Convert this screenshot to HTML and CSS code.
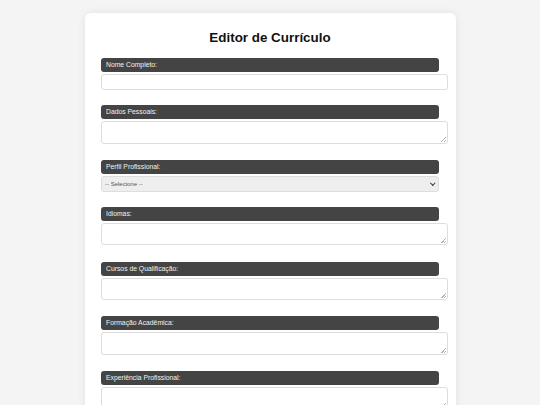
FILE: index.html
```html
<!DOCTYPE html>
<html lang="pt-BR">
<head>
<meta charset="utf-8">
<title>Editor de Currículo</title>
<link rel="stylesheet" href="styles.css">
</head>
<body>
<div class="card">
  <h1 class="title">Editor de Currículo</h1>
  <form class="form">
    <label class="lbl" for="nome">Nome Completo:</label>
    <input class="inp" id="nome" type="text">

    <label class="lbl" for="dados">Dados Pessoais:</label>
    <textarea class="area" id="dados"></textarea>

    <label class="lbl" for="perfil">Perfil Profissional:</label>
    <div class="selwrap">
      <select class="sel" id="perfil">
        <option>-- Selecione --</option>
      </select>
    </div>

    <label class="lbl" for="idiomas">Idiomas:</label>
    <textarea class="area" id="idiomas"></textarea>

    <label class="lbl" for="cursos">Cursos de Qualificação:</label>
    <textarea class="area" id="cursos"></textarea>

    <label class="lbl" for="formacao">Formação Acadêmica:</label>
    <textarea class="area" id="formacao"></textarea>

    <label class="lbl" for="exp">Experiência Profissional:</label>
    <textarea class="area" id="exp"></textarea>
  </form>
</div>
</body>
</html>
```
FILE: styles.css
```css
html, body {
  margin: 0;
  padding: 0;
}
body {
  background: #f4f4f4;
  font-family: "Liberation Sans", Arial, sans-serif;
  color: #222;
}
.card {
  width: 371px;
  box-sizing: border-box;
  margin: 13px 0 0 85px;
  background: #fff;
  border-radius: 6px;
  box-shadow: 0 0 8px rgba(0, 0, 0, 0.08);
  padding: 17px 17px 20px 16px;
  min-height: 420px;
}
.title {
  margin: 0 0 13px;
  font-size: 13.4px;
  line-height: 15px;
  font-weight: bold;
  text-align: center;
  color: #111;
}
.form {
  display: flex;
  flex-direction: column;
  align-items: flex-start;
}
.lbl {
  display: block;
  box-sizing: border-box;
  width: 338px;
  height: 14px;
  line-height: 14px;
  padding: 0 5px;
  background: #444;
  color: #f2f2f2;
  font-size: 6.8px;
  border-radius: 3px;
  margin-bottom: 2px;
}
.inp {
  display: block;
  box-sizing: border-box;
  width: 347px;
  height: 16px;
  border: 1px solid #ddd;
  border-radius: 3px;
  background: #fff;
  margin: 0 0 15px;
  padding: 3px 4px;
  font-family: inherit;
  font-size: 7px;
}
.area {
  display: block;
  box-sizing: border-box;
  width: 347px;
  height: 22.5px;
  border: 1px solid #ddd;
  border-radius: 3px;
  margin: 0 0 16.3px;
  padding: 3px 4px;
  font-family: inherit;
  font-size: 7px;
  resize: none;
  background: #fff linear-gradient(135deg,
      transparent 0 48%, #b5b5b5 48% 60%,
      transparent 60% 76%, #b5b5b5 76% 88%,
      transparent 88%) no-repeat right 1px bottom 1px / 5px 5px;
}
.selwrap {
  position: relative;
  margin: 0 0 14.6px;
}
.sel {
  display: block;
  box-sizing: border-box;
  width: 338px;
  height: 16.5px;
  margin: 0;
  padding: 0 3px;
  border: 1px solid #ddd;
  border-radius: 3px;
  background: #eee;
  color: #555;
  font-family: inherit;
  font-size: 6px;
  -webkit-appearance: none;
  appearance: none;
}
.selwrap::after {
  content: "";
  position: absolute;
  right: 5px;
  top: 5.5px;
  width: 2.5px;
  height: 2.5px;
  border-right: 1.2px solid #333;
  border-bottom: 1.2px solid #333;
  transform: rotate(45deg);
  pointer-events: none;
}
```
